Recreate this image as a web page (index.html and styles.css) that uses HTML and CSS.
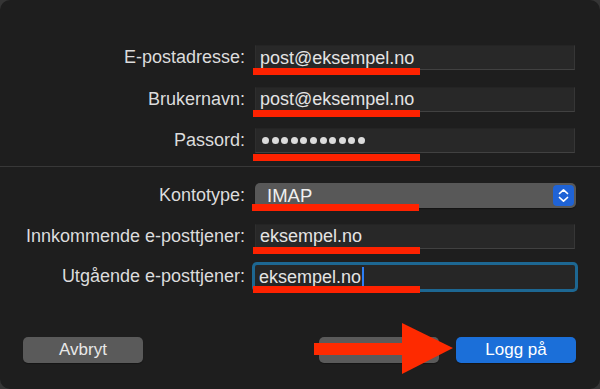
FILE: index.html
```html
<!DOCTYPE html>
<html lang="no">
<head>
    <meta charset="UTF-8">
    <title>Legg til konto</title>
    <link rel="stylesheet" href="styles.css">
</head>
<body>
<div class="win">
    <div class="group top">
        <label class="lbl">E-postadresse:</label>
        <div class="field"><span class="val">post@eksempel.no</span><i class="mark"></i></div>
        <label class="lbl">Brukernavn:</label>
        <div class="field"><span class="val">post@eksempel.no</span><i class="mark"></i></div>
        <label class="lbl">Passord:</label>
        <div class="field">
            <span class="dots"><b></b><b></b><b></b><b></b><b></b><b></b><b></b><b></b><b></b><b></b><b></b></span>
            <i class="mark low"></i>
        </div>
    </div>
    <div class="sep"></div>
    <div class="group bottom">
        <label class="lbl">Kontotype:</label>
        <div class="popup">
            <span class="val">IMAP</span>
            <span class="stepper">
                <svg width="21" height="21" viewBox="0 0 21 21">
                    <path d="M6.5 8.5 L10.5 4.8 L14.5 8.5 M6.5 12.5 L10.5 16.2 L14.5 12.5" fill="none" stroke="#fff" stroke-width="1.7" stroke-linecap="round" stroke-linejoin="round"/>
                </svg>
            </span>
            <i class="mark"></i>
        </div>
        <label class="lbl">Innkommende e-posttjener:</label>
        <div class="field"><span class="val">eksempel.no</span><i class="mark"></i></div>
        <label class="lbl">Utgående e-posttjener:</label>
        <div class="field focus"><span class="val">eksempel.no</span><span class="caret"></span><i class="mark"></i></div>
    </div>
    <div class="actions">
        <button class="btn">Avbryt</button>
        <div class="right">
            <button class="btn">Tilbake</button>
            <button class="btn primary">Logg på</button>
        </div>
        <svg class="arrow" width="140" height="52" viewBox="0 0 140 52">
            <rect x="0" y="20" width="89" height="12" fill="#fe2a00"/>
            <polygon points="88,0 139,25 88,51" fill="#fe2a00"/>
        </svg>
    </div>
</div>
</body>
</html>
```
FILE: styles.css
```css
*{
    margin: 0;
    padding: 0;
    box-sizing: border-box;
}
body{
    background: #353535;
    width: 600px;
    height: 389px;
    overflow: hidden;
    font-family: "Liberation Sans", Arial, sans-serif;
}
.win{
    position: relative;
    width: 600px;
    height: 389px;
    background: #1e1e1e;
    border-radius: 10px;
}
.group{
    display: grid;
    grid-template-columns: 245px 320px;
    column-gap: 10px;
    grid-auto-rows: 25px;
}
.top{
    padding-top: 45px;
    row-gap: 16.5px;
}
.bottom{
    padding-top: 16px;
    row-gap: 15.5px;
}
.sep{
    margin-top: 13px;
    height: 1px;
    background: #383838;
}
.lbl{
    text-align: right;
    color: #dcdcdc;
    font-size: 18px;
    line-height: 25px;
    white-space: nowrap;
}
.field{
    position: relative;
    background: #282828;
    border-top: 1px solid #242424;
    border-bottom: 1px solid #414141;
    border-right: 1px solid #363636;
    border-left: 1px solid #2e2e2e;
    display: flex;
    align-items: center;
    padding-left: 4px;
}
.val{
    color: #e4e4e4;
    font-size: 18px;
    line-height: 22px;
}
.dots{
    display: flex;
    gap: 2.6px;
    padding-left: 2px;
}
.dots b{
    width: 7px;
    height: 7px;
    border-radius: 50%;
    background: #dcdcdc;
}
.focus{
    margin-top: 1px;
    border: none;
    background: #262626;
    box-shadow: 0 0 0 3px #1d6792;
    border-radius: 2px;
}
.caret{
    width: 2px;
    height: 20px;
    background: #2d7df4;
    margin-left: 1px;
}
.popup{
    position: relative;
    background: #585858;
    border-radius: 5px;
    display: flex;
    align-items: center;
    justify-content: space-between;
    padding: 0 2px 0 12px;
    width: 321px;
    box-shadow: 0 1px 1px rgba(0,0,0,.35);
}
.popup .val{
    color: #f0f0f0;
    font-size: 18.5px;
}
.stepper{
    width: 21px;
    height: 21px;
    border-radius: 4px;
    background: #1f63d6;
    display: flex;
}
.mark{
    position: absolute;
    left: -3px;
    bottom: -6px;
    width: 167px;
    height: 7px;
    background: #fe2200;
}
.mark.low{
    bottom: -9px;
}
.popup .mark{
    left: -3px;
    bottom: -3px;
}
.focus .mark{
    bottom: -4px;
    left: -2px;
}
.actions{
    position: absolute;
    left: 23px;
    right: 24px;
    top: 337px;
    display: flex;
    justify-content: space-between;
}
.right{
    display: flex;
    gap: 17px;
}
.btn{
    width: 120px;
    height: 26px;
    border: none;
    border-radius: 5px;
    background: #5a5a5a;
    color: #e8e8e8;
    font-family: "Liberation Sans", Arial, sans-serif;
    font-size: 17px;
    box-shadow: 0 1px 1px rgba(0,0,0,.3);
}
.primary{
    background: #1b6fd9;
    color: #fff;
}
.arrow{
    position: absolute;
    left: 291px;
    top: -14px;
}
```
